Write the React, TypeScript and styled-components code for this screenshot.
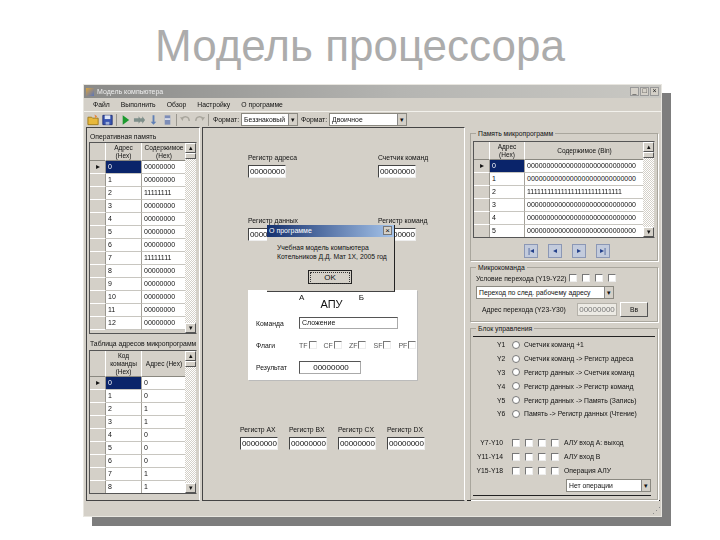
import styled, { createGlobalStyle } from "styled-components";

const GlobalStyle = createGlobalStyle`
  html, body { margin: 0; padding: 0; background: #fff; }
  * { box-sizing: border-box; }
`;

const ZEROS = "0000000000000000000000000000";
const ONES = "1111111111111111111111111111";

const memoryRows = ["00000000", "00000000", "11111111", "00000000", "00000000", "00000000", "00000000", "11111111", "00000000", "00000000", "00000000", "00000000", "00000000"];
const mapRows = ["0", "0", "1", "1", "0", "0", "0", "1", "1"];
const microRows = [ZEROS, ZEROS, ONES, ZEROS, ZEROS, ZEROS];

const signals = [
  ["Y1", "Счетчик команд +1"],
  ["Y2", "Счетчик команд -> Регистр адреса"],
  ["Y3", "Регистр данных -> Счетчик команд"],
  ["Y4", "Регистр данных -> Регистр команд"],
  ["Y5", "Регистр данных -> Память (Запись)"],
  ["Y6", "Память -> Регистр данных (Чтение)"],
];

const aluLines = [
  ["Y7-Y10", "АЛУ вход A: выход"],
  ["Y11-Y14", "АЛУ вход B"],
  ["Y15-Y18", "Операция АЛУ"],
];

const Icon = ({ children }: { children: React.ReactNode }) => (
  <svg width="13" height="14" viewBox="0 0 14 14">{children}</svg>
);

type TableProps = {
  columns: string;
  headHeight: number;
  head: string[];
  rows: string[][];
  height: number;
};

const DataTable = ({ columns, headHeight, head, rows, height }: TableProps) => (
  <TableFrame $height={height}>
    <TableBody>
      <Row $columns={columns} $height={headHeight}>
        <HeadCell />
        {head.map((h) => <HeadCell key={h}>{h}</HeadCell>)}
      </Row>
      {rows.map((r, i) => (
        <Row key={i} $columns={columns} $height={13}>
          <RowHeader>{i === 0 ? "▸" : ""}</RowHeader>
          {r.map((c, j) => (
            <Cell key={j} $selected={i === 0 && j === 0}>{c}</Cell>
          ))}
        </Row>
      ))}
    </TableBody>
    <ScrollBar>
      <ScrollButton>▴</ScrollButton>
      <ScrollThumb />
      <ScrollTrack />
      <ScrollButton>▾</ScrollButton>
    </ScrollBar>
  </TableFrame>
);

const Register = ({ label, value }: { label: string; value: string }) => (
  <RegisterBox>
    <SmallText>{label}</SmallText>
    <RegisterInput>{value}</RegisterInput>
  </RegisterBox>
);

const App = () => (
  <>
    <GlobalStyle />
    <Slide>
      <Title>Модель процессора</Title>
      <Window>
        <TitleBar>
          <TitleIcon />
          <TitleText>Модель компьютера</TitleText>
          <WinButton>_</WinButton>
          <WinButton>□</WinButton>
          <WinButton>×</WinButton>
        </TitleBar>
        <MenuBar>
          <span>Файл</span>
          <span>Выполнить</span>
          <span>Обзор</span>
          <span>Настройку</span>
          <span>О программе</span>
        </MenuBar>
        <ToolBar>
          <Icon><path d="M1 4h4l1 1h6v7H1z" fill="#e8b93c" stroke="#a07a1a" /><path d="M8 1l3 2-2 2z" fill="#e9863a" /></Icon>
          <Icon><path d="M2 2h10v10H2z" fill="#3a55b0" stroke="#22327a" /><path d="M4 2h6v4H4z" fill="#dfe6f5" /><path d="M5 9h4v3H5z" fill="#9fb0d8" /></Icon>
          <ToolSep />
          <Icon><path d="M4 2l7 5-7 5z" fill="#1c9a2e" /></Icon>
          <Icon><path d="M1 5h5V3l3 4-3 4V9H1z M8 5h2V3l3 4-3 4V9H8z" fill="#7e8f8a" /></Icon>
          <Icon><path d="M6 2h2v7h2l-3 3-3-3h2z" fill="#5f7fb5" /></Icon>
          <Icon><path d="M4 2h6v10H4z" fill="#7d8db8" /><path d="M4 5h6v2H4z" fill="#d5dae8" /></Icon>
          <ToolSep />
          <Icon><path d="M3 6c2-4 8-3 8 2" fill="none" stroke="#a9a69d" strokeWidth="1.5" /><path d="M1 4l4 0-1 4z" fill="#a9a69d" /></Icon>
          <Icon><path d="M11 6C9 2 3 3 3 8" fill="none" stroke="#a9a69d" strokeWidth="1.5" /><path d="M13 4H9l1 4z" fill="#a9a69d" /></Icon>
          <ToolSep />
          <ToolLabel>Формат:</ToolLabel>
          <ComboBox $width={57}>Беззнаковый<ComboArrow>▾</ComboArrow></ComboBox>
          <ToolLabel>Формат:</ToolLabel>
          <ComboBox $width={78}>Двоичное<ComboArrow>▾</ComboArrow></ComboBox>
        </ToolBar>
        <Body>
          <LeftPanel>
            <PanelCaption>Оперативная память</PanelCaption>
            <DataTable
              columns="16px 36px 45px"
              headHeight={18}
              head={["Адрес (Hex)", "Содержимое (Hex)"]}
              rows={memoryRows.map((v, i) => [String(i), v])}
              height={192}
            />
            <SecondCaption>Таблица адресов микропрограмм</SecondCaption>
            <DataTable
              columns="16px 36px 45px"
              headHeight={26}
              head={["Код команды (Hex)", "Адрес (Hex)"]}
              rows={mapRows.map((v, i) => [String(i), v])}
              height={144}
            />
          </LeftPanel>

          <CenterPanel>
            <TopRegisters>
              <Register label="Регистр адреса" value="00000000" />
              <Register label="Счетчик команд" value="00000000" />
              <Register label="Регистр данных" value="00000000" />
              <Register label="Регистр команд" value="00000000" />
            </TopRegisters>

            <AluPanel>
              <AluPorts><span>А</span><AluName>АПУ</AluName><span>Б</span></AluPorts>
              <AluRow>
                <AluLabel>Команда</AluLabel>
                <OperationField>Сложение</OperationField>
              </AluRow>
              <AluRow>
                <AluLabel>Флаги</AluLabel>
                <FlagList>
                  {["TF", "CF", "ZF", "SF", "PF"].map((f) => (
                    <Flag key={f}>{f}<CheckBox /></Flag>
                  ))}
                </FlagList>
              </AluRow>
              <AluRow>
                <AluLabel>Результат</AluLabel>
                <ResultField>00000000</ResultField>
              </AluRow>
            </AluPanel>

            <BottomRegisters>
              <Register label="Регистр AX" value="00000000" />
              <Register label="Регистр BX" value="00000000" />
              <Register label="Регистр CX" value="00000000" />
              <Register label="Регистр DX" value="00000000" />
            </BottomRegisters>

            <Dialog>
              <DialogTitle>
                О программе
                <DialogClose>×</DialogClose>
              </DialogTitle>
              <DialogText>
                Учебная модель компьютера
                <br />
                Котельников Д.Д. Мат 1Х, 2005 год
              </DialogText>
              <DialogButton><span>OK</span></DialogButton>
            </Dialog>
          </CenterPanel>

          <RightPanel>
            <GroupBox $height={128}>
              <Legend>Память микропрограмм</Legend>
              <DataTable
                columns="16px 35px 120px"
                headHeight={18}
                head={["Адрес (Hex)", "Содержимое (Bin)"]}
                rows={microRows.map((v, i) => [String(i), v])}
                height={97}
              />
              <NavRow>
                <NavButton>|◂</NavButton>
                <NavButton>◂</NavButton>
                <NavButton>▸</NavButton>
                <NavButton>▸|</NavButton>
              </NavRow>
            </GroupBox>

            <GroupBox $height={55}>
              <Legend>Микрокоманда</Legend>
              <ConditionRow>
                <ConditionLabel>Условие перехода (Y19-Y22)</ConditionLabel>
                <CheckGroup $gap={5}><CheckBox /><CheckBox /><CheckBox /><CheckBox /></CheckGroup>
              </ConditionRow>
              <BranchSelect>
                <ComboBox $width={138}>Переход по след. рабочему адресу<ComboArrow>▾</ComboArrow></ComboBox>
              </BranchSelect>
              <JumpRow>
                <JumpLabel>Адрес перехода (Y23-Y30)</JumpLabel>
                <JumpInput>00000000</JumpInput>
                <JumpButton>Вв</JumpButton>
              </JumpRow>
            </GroupBox>

            <ControlGroup>
              <Legend>Блок управления</Legend>
              <SignalList>
                {signals.map(([code, text]) => (
                  <SignalRow key={code}>
                    <SignalCode>{code}</SignalCode>
                    <Radio />
                    <span>{text}</span>
                  </SignalRow>
                ))}
              </SignalList>
              <AluLines>
                {aluLines.map(([code, text]) => (
                  <AluLine key={code}>
                    <AluCode>{code}</AluCode>
                    <CheckGroup $gap={5}><CheckBox /><CheckBox /><CheckBox /><CheckBox /></CheckGroup>
                    <AluLineText>{text}</AluLineText>
                  </AluLine>
                ))}
              </AluLines>
              <OperationSelect>
                <ComboBox $width={85}>Нет операции<ComboArrow>▾</ComboArrow></ComboBox>
              </OperationSelect>
            </ControlGroup>
          </RightPanel>
        </Body>
        <StatusBar><Grip>⋰</Grip></StatusBar>
      </Window>
    </Slide>
  </>
);

export default App;

const Slide = styled.div`
  width: 720px;
  height: 540px;
  overflow: hidden;
  background: #fff;
  font-family: "Liberation Sans", Arial, sans-serif;
`;

const Title = styled.h1`
  margin: 0;
  height: 84px;
  padding-top: 20px;
  text-align: center;
  font-size: 44px;
  line-height: 52px;
  font-weight: 400;
  color: #acacac;
`;

const Window = styled.div`
  width: 579px;
  height: 433px;
  margin-left: 83px;
  background: #d4d0c8;
  border: 1px solid #e8e6e0;
  box-shadow: 9px 9px 0 #7d7d7d;
  display: flex;
  flex-direction: column;
  font-size: 6.8px;
  color: #111;
  filter: blur(0.3px);
`;

const TitleBar = styled.div`
  height: 13px;
  display: flex;
  align-items: center;
  gap: 1px;
  padding: 0 2px;
  background: linear-gradient(to right, #8a8a88, #b5b5b2 55%, #c9c8c3);
`;

const TitleIcon = styled.div`
  width: 8px;
  height: 8px;
  margin-right: 2px;
  background: linear-gradient(135deg, #d9a441, #5b74b8);
`;

const TitleText = styled.span`
  flex: 1;
  color: #eee;
  font-size: 7px;
`;

const WinButton = styled.div`
  width: 9px;
  height: 9px;
  background: #d4d0c8;
  border: 1px solid #999;
  font-size: 7px;
  line-height: 6px;
  text-align: center;
  color: #222;
`;

const MenuBar = styled.div`
  height: 13px;
  display: flex;
  align-items: center;
  gap: 11px;
  padding-left: 9px;
`;

const ToolBar = styled.div`
  height: 16px;
  display: flex;
  align-items: center;
  gap: 1px;
  padding-left: 3px;
  border-top: 1px solid #f2f1ec;
`;

const ToolSep = styled.div`
  width: 1px;
  height: 12px;
  margin: 0 1px;
  background: #9a978f;
`;

const ToolLabel = styled.span`
  margin: 0 1px 0 2px;
`;

const ComboBox = styled.div<{ $width: number }>`
  position: relative;
  width: ${(p) => p.$width}px;
  height: 13px;
  padding: 0 10px 0 2px;
  background: #fff;
  border: 1px solid #8a8880;
  line-height: 11px;
  white-space: nowrap;
  overflow: hidden;
`;

const ComboArrow = styled.span`
  position: absolute;
  right: 0;
  top: 0;
  width: 9px;
  height: 11px;
  background: #d4d0c8;
  border-left: 1px solid #888;
  text-align: center;
  line-height: 11px;
  font-size: 7px;
  color: #111;
`;

const Body = styled.div`
  flex: 1;
  display: flex;
  gap: 2px;
  padding: 0 1px 0 2px;
  min-height: 0;
`;

const LeftPanel = styled.div`
  width: 114px;
  padding: 4px 2px 0;
  border: 1px solid #444;
  border-right-color: #fff;
`;

const PanelCaption = styled.div`
  height: 10px;
  padding-left: 1px;
  line-height: 9px;
  white-space: nowrap;
`;

const SecondCaption = styled(PanelCaption)`
  margin-top: 4px;
  height: 12px;
  line-height: 11px;
`;

const TableFrame = styled.div<{ $height: number }>`
  height: ${(p) => p.$height}px;
  display: flex;
  overflow: hidden;
  background: #d4d0c8;
  border: 1px solid #555;
  border-color: #555 #d4d0c8 #555 #555;
`;

const TableBody = styled.div`
  flex: 1;
  min-width: 0;
  overflow: hidden;
`;

const Row = styled.div<{ $columns: string; $height: number }>`
  display: grid;
  grid-template-columns: ${(p) => p.$columns};
  height: ${(p) => p.$height}px;
`;

const HeadCell = styled.div`
  display: flex;
  align-items: center;
  justify-content: center;
  padding: 0 2px;
  background: #d4d0c8;
  border-right: 1px solid #fff;
  border-bottom: 1px solid #8a8880;
  text-align: center;
  line-height: 8px;
  font-size: 6.5px;
`;

const RowHeader = styled.div`
  background: #d4d0c8;
  border-bottom: 1px solid #fff;
  border-right: 1px solid #9a978f;
  text-align: center;
  font-size: 8px;
  line-height: 12px;
  color: #111;
`;

const Cell = styled.div<{ $selected?: boolean }>`
  padding-left: 2px;
  line-height: 12px;
  font-size: 7px;
  white-space: nowrap;
  overflow: hidden;
  background: ${(p) => (p.$selected ? "#0a246a" : "#fff")};
  color: ${(p) => (p.$selected ? "#fff" : "#111")};
  border-right: 1px solid #a5a29a;
  border-bottom: 1px solid #c8c6c0;
`;

const ScrollBar = styled.div`
  width: 11px;
  display: flex;
  flex-direction: column;
  background: repeating-conic-gradient(#d4d0c8 0 25%, #fff 0 50%) 0 0 / 2px 2px;
`;

const ScrollButton = styled.div`
  height: 10px;
  background: #d4d0c8;
  border: 1px solid;
  border-color: #fff #555 #555 #fff;
  font-size: 7px;
  line-height: 7px;
  text-align: center;
  color: #111;
`;

const ScrollThumb = styled(ScrollButton)`
  height: 6px;
`;

const ScrollTrack = styled.div`
  flex: 1;
`;

const CenterPanel = styled.div`
  position: relative;
  width: 263px;
  border: 1px solid #444;
  border-right-color: #fff;
`;

const TopRegisters = styled.div`
  display: grid;
  grid-template-columns: 130px 60px;
  grid-auto-rows: 63px;
  padding: 25px 0 0 45px;
  height: 162px;
`;

const RegisterBox = styled.div`
  display: flex;
  flex-direction: column;
  gap: 3px;
  white-space: nowrap;
`;

const SmallText = styled.span`
  line-height: 9px;
`;

const RegisterInput = styled.div`
  width: 38px;
  height: 13px;
  background: #fff;
  border: 1px solid;
  border-color: #444 #eee #eee #444;
  font-size: 8px;
  line-height: 11px;
  padding-left: 1px;
  overflow: hidden;
  letter-spacing: -0.1px;
`;

const AluPanel = styled.div`
  width: 169px;
  height: 90px;
  margin-left: 45px;
  padding: 3px 0 0 8px;
  background: #fff;
  box-shadow: 1px 1px 0 #bbb;
`;

const AluPorts = styled.div`
  display: flex;
  justify-content: space-between;
  align-items: flex-start;
  width: 65px;
  margin-left: 43px;
  height: 19px;
  font-size: 8px;
`;

const AluName = styled.span`
  font-size: 11px;
  line-height: 16px;
  margin-top: 3px;
`;

const AluRow = styled.div`
  display: flex;
  align-items: center;
  height: 22px;
`;

const AluLabel = styled.span`
  width: 43px;
`;

const OperationField = styled.div`
  width: 99px;
  height: 12px;
  padding-left: 2px;
  border: 1px solid;
  border-color: #555 #aaa #aaa #555;
  line-height: 10px;
  font-size: 7px;
`;

const ResultField = styled(OperationField)`
  width: 62px;
  height: 13px;
  line-height: 11px;
  text-align: center;
  font-size: 8px;
`;

const FlagList = styled.div`
  display: flex;
  gap: 7px;
`;

const Flag = styled.div`
  display: flex;
  align-items: center;
  gap: 1px;
  font-size: 7px;
  color: #555;
`;

const CheckBox = styled.div`
  width: 8px;
  height: 8px;
  flex: none;
  background: #fff;
  border: 1px solid;
  border-color: #777 #eee #eee #777;
`;

const BottomRegisters = styled.div`
  display: grid;
  grid-template-columns: repeat(4, 49px);
  margin: 45px 0 0 37px;
`;

const Dialog = styled.div`
  position: absolute;
  left: 64px;
  top: 97px;
  width: 128px;
  height: 67px;
  background: #d4d0c8;
  border-right: 1px solid #222;
  border-bottom: 1px solid #444;
`;

const DialogTitle = styled.div`
  position: relative;
  height: 12px;
  padding-left: 2px;
  background: linear-gradient(to right, #14306e, #a6c4ea);
  color: #fff;
  line-height: 11px;
  font-size: 7px;
`;

const DialogClose = styled.span`
  position: absolute;
  right: 2px;
  top: 1px;
  width: 9px;
  height: 9px;
  background: #d4d0c8;
  border: 1px solid #777;
  color: #111;
  text-align: center;
  line-height: 7px;
  font-size: 8px;
`;

const DialogText = styled.div`
  padding: 6px 0 0 10px;
  line-height: 9px;
  white-space: nowrap;
`;

const DialogButton = styled.div`
  width: 44px;
  height: 14px;
  margin: 9px 0 0 41px;
  border: 1px solid #222;
  background: #d4d0c8;
  text-align: center;
  font-size: 8px;
  line-height: 10px;
  padding: 1px;

  span {
    display: block;
    border: 1px dotted #333;
  }
`;

const RightPanel = styled.div`
  flex: 1;
  display: flex;
  flex-direction: column;
  gap: 6px;
  padding: 6px 2px 0 3px;
  min-width: 0;
  border-bottom: 1px solid #222;
`;

const GroupBox = styled.div<{ $height: number }>`
  position: relative;
  height: ${(p) => p.$height}px;
  padding: 7px 2px 0 2px;
  border: 1px solid #a9a69d;
  box-shadow: 1px 1px 0 #fff;
`;

const Legend = styled.span`
  position: absolute;
  left: 5px;
  top: -5px;
  padding: 0 2px;
  background: #d4d0c8;
  line-height: 9px;
  white-space: nowrap;
`;

const NavRow = styled.div`
  display: flex;
  justify-content: center;
  gap: 10px;
  margin-top: 6px;
  padding-left: 6px;
`;

const NavButton = styled.div`
  width: 14px;
  height: 14px;
  background: #c3cbdc;
  border: 1px solid #8b97b5;
  color: #23408a;
  text-align: center;
  font-size: 8px;
  line-height: 12px;
`;

const ConditionRow = styled.div`
  display: flex;
  align-items: center;
  height: 12px;
  margin: -3px 0 2px 3px;
  white-space: nowrap;
`;

const ConditionLabel = styled.span`
  width: 93px;
`;

const CheckGroup = styled.div<{ $gap: number }>`
  display: flex;
  gap: ${(p) => p.$gap}px;
`;

const BranchSelect = styled.div`
  margin-left: 3px;
`;

const JumpRow = styled.div`
  display: flex;
  align-items: center;
  height: 16px;
  margin-top: 2px;
  white-space: nowrap;
`;

const JumpLabel = styled.span`
  width: 104px;
  padding-left: 9px;
`;

const JumpInput = styled.div`
  width: 40px;
  height: 13px;
  background: #eceae4;
  border: 1px solid #b5b2aa;
  color: #777;
  text-align: center;
  line-height: 11px;
  font-size: 8px;
`;

const JumpButton = styled.div`
  width: 28px;
  height: 15px;
  margin-left: 3px;
  border: 1px solid;
  border-color: #fff #555 #555 #fff;
  text-align: center;
  line-height: 13px;
`;

const ControlGroup = styled(GroupBox).attrs({ $height: 172 })``;

const SignalList = styled.div`
  display: flex;
  flex-direction: column;
  padding-top: 1px;
  border-top: 1px solid #222;
`;

const SignalRow = styled.div`
  display: flex;
  align-items: center;
  height: 13.8px;
  white-space: nowrap;
`;

const SignalCode = styled.span`
  width: 15px;
  margin-left: 24px;
`;

const Radio = styled.div`
  width: 8px;
  height: 8px;
  margin-right: 4px;
  border-radius: 50%;
  background: #fff;
  border: 1px solid #777;
`;

const AluLines = styled.div`
  display: flex;
  flex-direction: column;
  margin-top: 15px;
`;

const AluLine = styled.div`
  display: flex;
  align-items: center;
  height: 14px;
  white-space: nowrap;
`;

const AluCode = styled.span`
  width: 30px;
  margin-right: 9px;
  text-align: right;
`;

const AluLineText = styled.span`
  margin-left: 5px;
`;

const OperationSelect = styled.div`
  display: flex;
  justify-content: flex-end;
  margin: 1px 4px 0 0;
  padding-bottom: 3px;
  border-bottom: 1px solid #222;
`;

const StatusBar = styled.div`
  height: 15px;
  display: flex;
  justify-content: flex-end;
`;

const Grip = styled.span`
  font-size: 9px;
  line-height: 20px;
  color: #888;
`;
